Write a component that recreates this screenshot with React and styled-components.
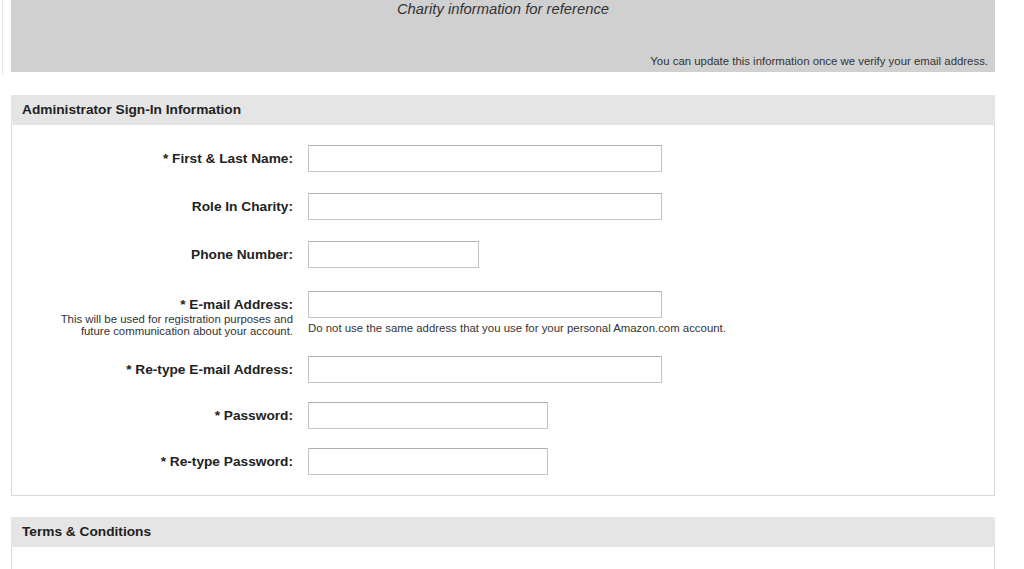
import React from 'react'
import styled, { createGlobalStyle } from 'styled-components'

const GlobalStyle = createGlobalStyle`
  body {
    margin: 0;
    background: #fff;
    font-family: "Liberation Sans", Arial, Helvetica, sans-serif;
    color: #222;
  }
`

const Page = styled.div`
  width: 985px;
  padding-left: 10px;
`

const TopWrap = styled.div`
  margin-left: -8px;
  padding-left: 8px;
  padding-bottom: 3px;
  border-left: 1px solid #e6e6e6;
`

const InfoBox = styled.div`
  height: 72px;
  box-sizing: border-box;
  background-color: #d0d0d0;
  display: flex;
  flex-direction: column;
  justify-content: space-between;
  padding: 0 7px 5px 0;
`

const InfoTitle = styled.div`
  font-size: 14.8px;
  font-style: italic;
  line-height: 18px;
  text-align: center;
  color: #333;
  padding-left: 7px;
`

const InfoNote = styled.div`
  font-size: 11.4px;
  line-height: 12px;
  text-align: right;
  color: #333;
`

const Section = styled.div`
  margin-left: 1px;
  margin-top: ${p => p.$top}px;
`

const SectionHeader = styled.div`
  height: 30px;
  box-sizing: border-box;
  background-color: #e5e5e5;
  display: flex;
  align-items: center;
  padding: 0 0 2px 11px;
  font-size: 13.7px;
  font-weight: bold;
  color: #222;
`

const SectionBody = styled.div`
  border: 1px solid #d8d8d8;
  border-top: none;
  background: #fff;
  padding: 20px 0 20px 0;
  min-height: ${p => p.$min || 0}px;
  box-sizing: border-box;
`

const Form = styled.div`
  display: flex;
  flex-direction: column;
`

const Row = styled.div`
  display: grid;
  grid-template-columns: 281px 1fr;
  column-gap: 15px;
  margin-top: ${p => p.$space || 0}px;
`

const LabelCol = styled.div`
  text-align: right;
`

const Label = styled.div`
  font-size: 13.7px;
  font-weight: bold;
  line-height: 27px;
  color: #222;
`

const Hint = styled.div`
  font-size: 11.4px;
  line-height: 12px;
  margin-top: -5px;
  color: #333;
`

const FieldCol = styled.div`
  display: flex;
  flex-direction: column;
`

const Input = styled.input`
  width: ${p => p.$w}px;
  height: 27px;
  box-sizing: border-box;
  border: 1px solid #c4c4c4;
  border-top-color: #b0b0b0;
  background: #fff;
  margin: 0;
  padding: 2px 5px;
  font-family: inherit;
  font-size: 13px;
`

const Note = styled.div`
  font-size: 11.4px;
  line-height: 12px;
  margin-top: 4px;
  color: #333;
`

const fields = [
  { label: '* First & Last Name:', w: 354, space: 0 },
  { label: 'Role In Charity:', w: 354, space: 21 },
  { label: 'Phone Number:', w: 171, space: 21 },
  {
    label: '* E-mail Address:',
    w: 354,
    space: 23,
    hint: ['This will be used for registration purposes and', 'future communication about your account.'],
    note: 'Do not use the same address that you use for your personal Amazon.com account.',
  },
  { label: '* Re-type E-mail Address:', w: 354, space: 19 },
  { label: '* Password:', w: 240, space: 19, type: 'password' },
  { label: '* Re-type Password:', w: 240, space: 19, type: 'password' },
]

export default function App() {
  return (
    <>
      <GlobalStyle />
      <Page>
        <TopWrap>
          <InfoBox>
            <InfoTitle>Charity information for reference</InfoTitle>
            <InfoNote>You can update this information once we verify your email address.</InfoNote>
          </InfoBox>
        </TopWrap>

        <Section $top={20}>
          <SectionHeader>Administrator Sign-In Information</SectionHeader>
          <SectionBody>
            <Form>
              {fields.map(f => (
                <Row key={f.label} $space={f.space}>
                  <LabelCol>
                    <Label>{f.label}</Label>
                    {f.hint && (
                      <Hint>
                        {f.hint.map(h => <div key={h}>{h}</div>)}
                      </Hint>
                    )}
                  </LabelCol>
                  <FieldCol>
                    <Input $w={f.w} type={f.type || 'text'} />
                    {f.note && <Note>{f.note}</Note>}
                  </FieldCol>
                </Row>
              ))}
            </Form>
          </SectionBody>
        </Section>

        <Section $top={21}>
          <SectionHeader>Terms &amp; Conditions</SectionHeader>
          <SectionBody $min={120} />
        </Section>
      </Page>
    </>
  )
}
